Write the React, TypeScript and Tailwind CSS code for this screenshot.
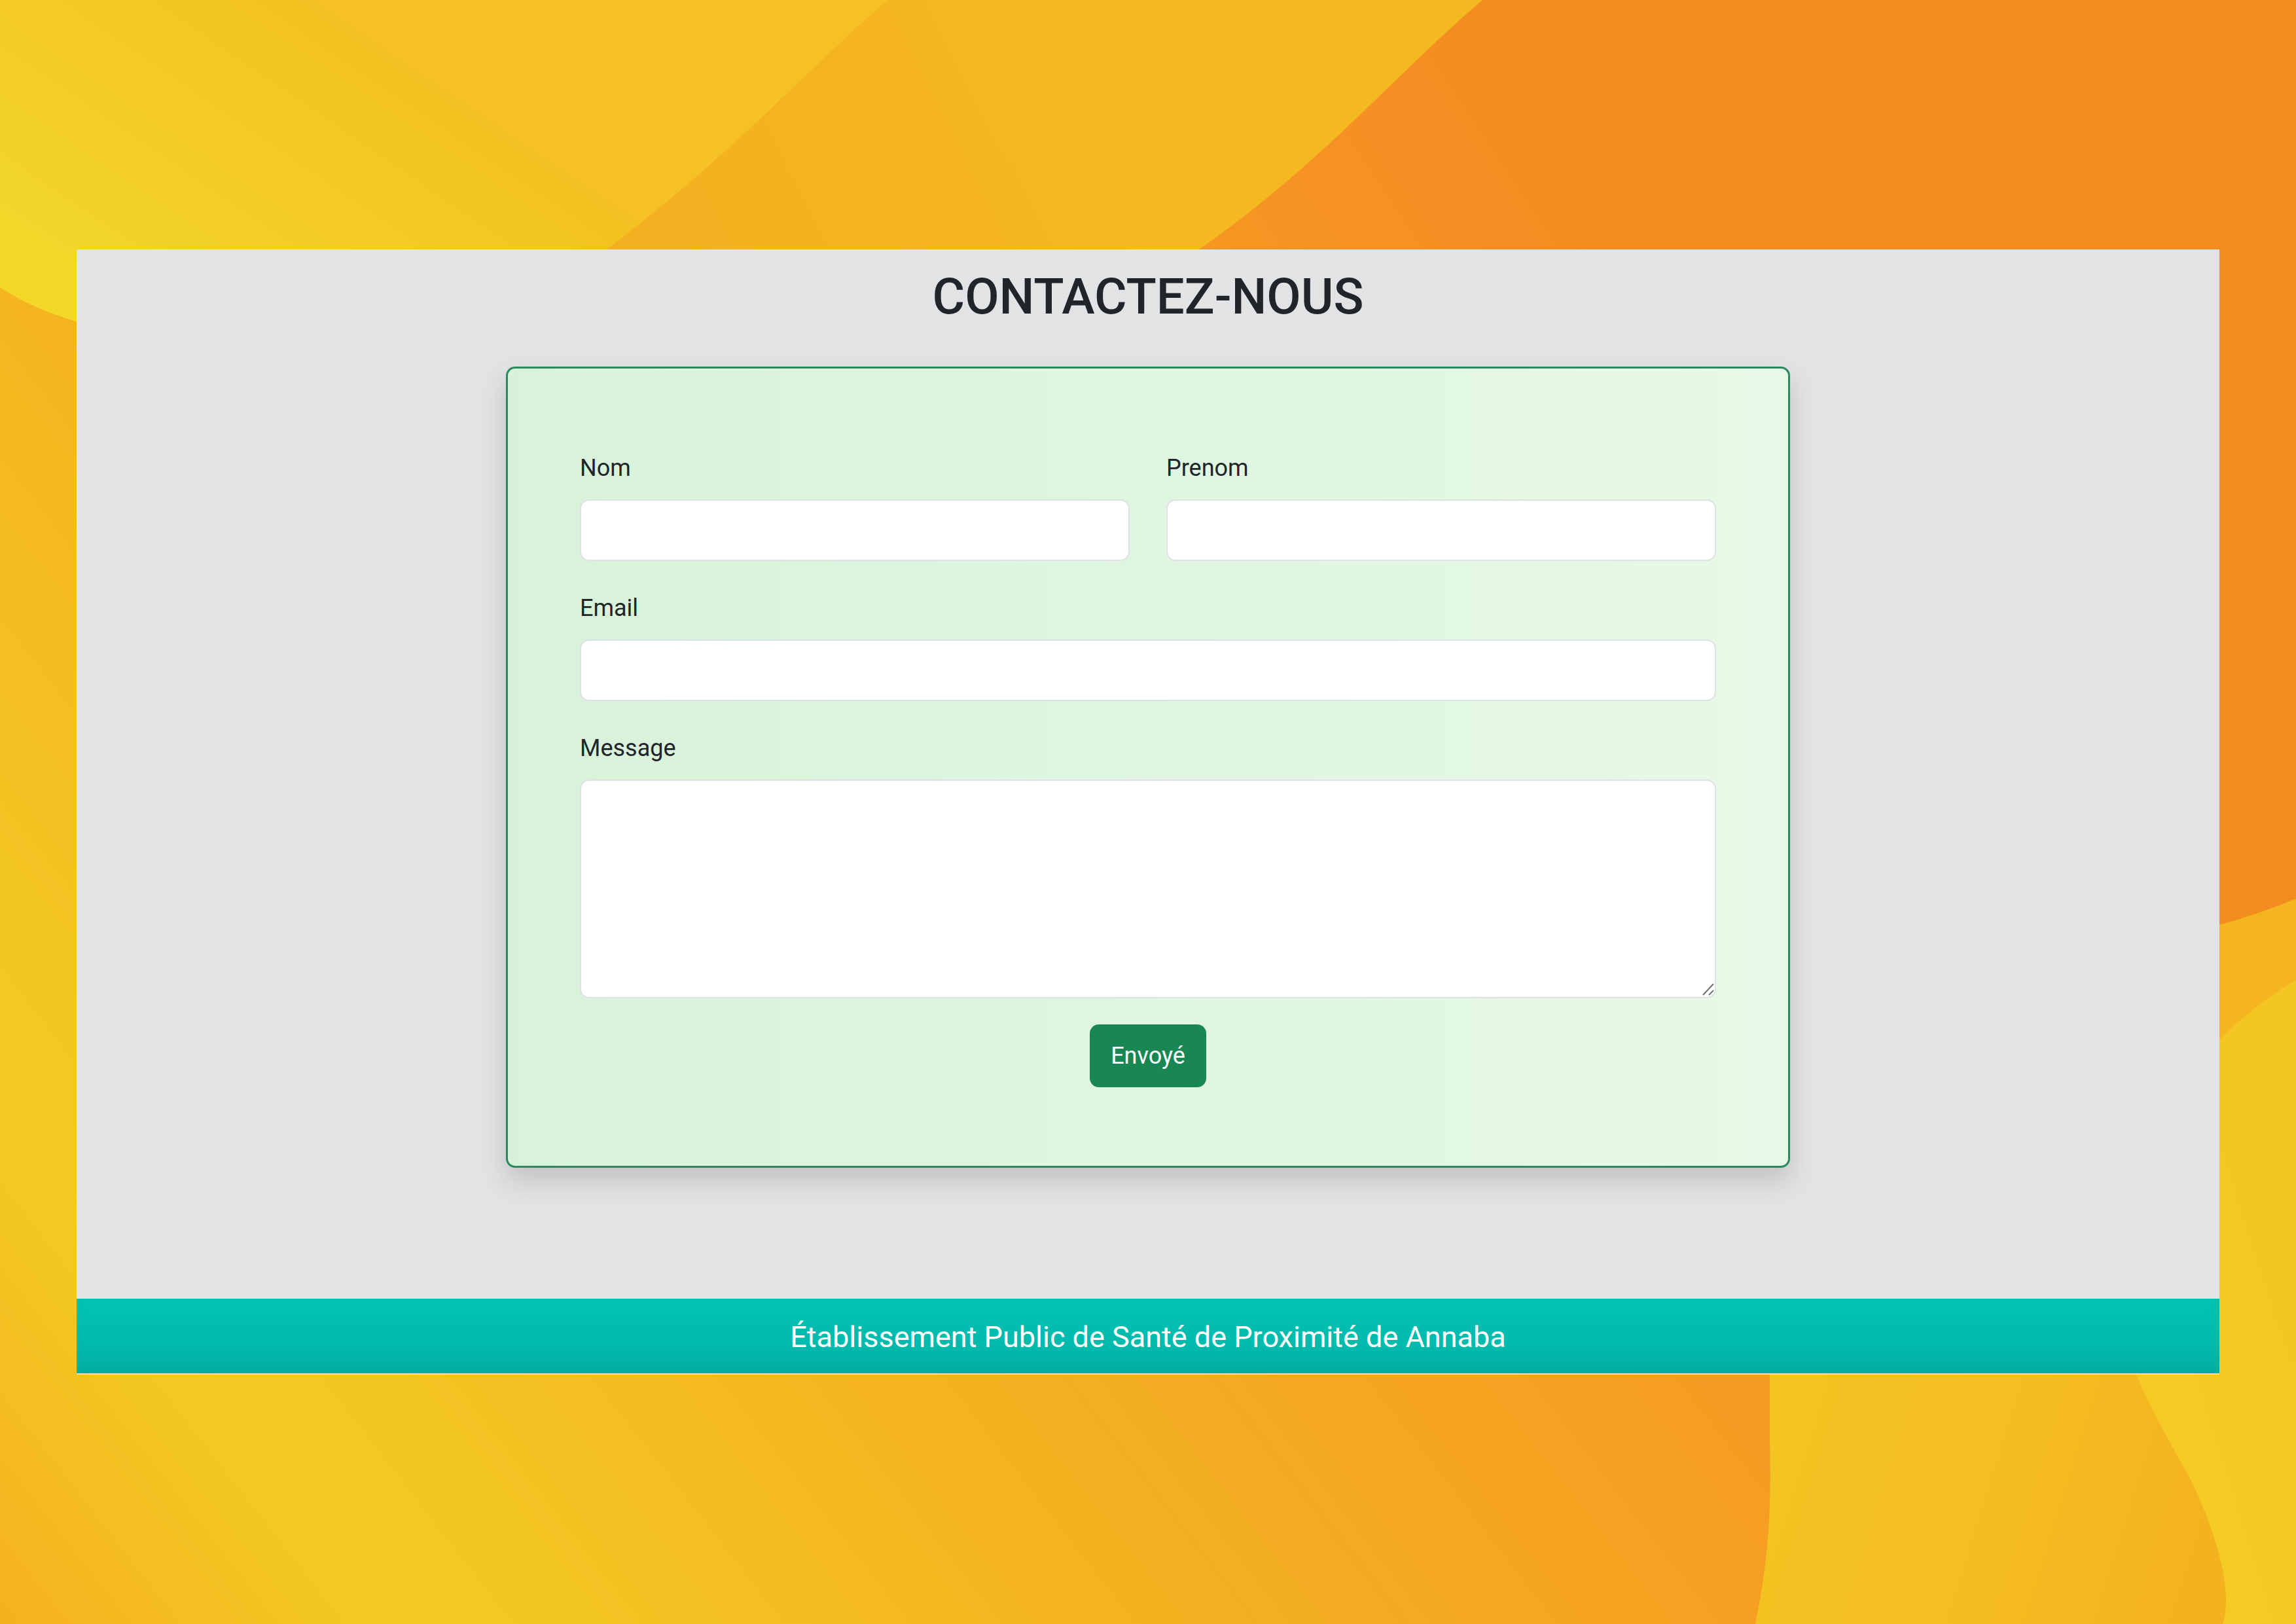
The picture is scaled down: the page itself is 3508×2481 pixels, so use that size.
import React from "react";

const fieldClass =
  "block w-full rounded-[14px] border-2 border-[#dee2e6] bg-white px-8 text-[36px] text-[#212529] outline-none focus:border-[#198754]";

function Backdrop() {
  return (
    <svg
      className="absolute inset-0 h-full w-full"
      viewBox="0 0 3508 2481"
      preserveAspectRatio="none"
      aria-hidden="true"
    >
      <defs>
        <linearGradient id="lower" gradientUnits="userSpaceOnUse" x1="0" y1="2481" x2="1794" y2="1082">
          <stop offset="0" stopColor="#f4b120" />
          <stop offset="0.1" stopColor="#f6be21" />
          <stop offset="0.15" stopColor="#f2c321" />
          <stop offset="0.21" stopColor="#f4c925" />
          <stop offset="0.32" stopColor="#f2c422" />
          <stop offset="0.44" stopColor="#f5bd20" />
          <stop offset="0.57" stopColor="#f4b41f" />
          <stop offset="0.72" stopColor="#f3ac22" />
          <stop offset="0.86" stopColor="#f6a321" />
          <stop offset="1" stopColor="#f59d22" />
        </linearGradient>
        <linearGradient id="sun" gradientUnits="userSpaceOnUse" x1="0" y1="360" x2="320" y2="-110">
          <stop offset="0" stopColor="#f4d829" />
          <stop offset="0.2" stopColor="#f0d229" />
          <stop offset="0.42" stopColor="#f5cd27" />
          <stop offset="0.7" stopColor="#f3c824" />
          <stop offset="0.96" stopColor="#f2c220" />
          <stop offset="1" stopColor="#f5c124" />
        </linearGradient>
        <linearGradient id="amber" gradientUnits="userSpaceOnUse" x1="950" y1="381" x2="1700" y2="0">
          <stop offset="0" stopColor="#f4af20" />
          <stop offset="1" stopColor="#f4b921" />
        </linearGradient>
        <linearGradient id="orange" gradientUnits="userSpaceOnUse" x1="1850" y1="381" x2="2280" y2="90">
          <stop offset="0" stopColor="#f59722" />
          <stop offset="0.7" stopColor="#f68e24" />
          <stop offset="1" stopColor="#f48d1f" />
        </linearGradient>
        <linearGradient id="corner" gradientUnits="userSpaceOnUse" x1="2700" y1="2200" x2="3400" y2="2420">
          <stop offset="0" stopColor="#f3c422" />
          <stop offset="0.5" stopColor="#f5bd21" />
          <stop offset="1" stopColor="#f3b120" />
        </linearGradient>
        <linearGradient id="edge" gradientUnits="userSpaceOnUse" x1="3300" y1="2150" x2="3520" y2="2080">
          <stop offset="0" stopColor="#f4cb25" />
          <stop offset="1" stopColor="#f3c623" />
        </linearGradient>
      </defs>
      <rect width="3508" height="2481" fill="url(#lower)" />
      <path d="M0 0H1500V600H300Q117 491 117 491Q50 472 0 439Z" fill="url(#sun)" />
      <path d="M1356 0C1240 100 1120 235 927 381L900 600H2400V0Z" fill="url(#amber)" />
      <path d="M2265 0C2130 115 2020 250 1832 381L1800 600H3300V1440L3391 1413Q3450 1397 3508 1373V0Z" fill="url(#orange)" />
      <path d="M3300 600H3508V1373Q3450 1397 3391 1413L3300 1440Z" fill="#f48d1f" />
      <path d="M3300 1438L3391 1413Q3450 1397 3508 1373V1700H3300Z" fill="#f4b520" />
      <path d="M2704 2000V2200C2706 2290 2705 2370 2682 2481H3508V2000Z" fill="url(#corner)" />
      <path d="M3300 1660L3391 1588Q3447 1533 3508 1497V2481H3396C3410 2440 3395 2360 3347 2260C3316 2205 3290 2160 3264 2100L3200 2000Z" fill="url(#edge)" />
    </svg>
  );
}

function FieldLabel({ htmlFor, children }: { htmlFor: string; children: React.ReactNode }) {
  return (
    <label htmlFor={htmlFor} className="mb-4 block text-[36px] leading-[64px]">
      {children}
    </label>
  );
}

function Field({ id, label, type = "text" }: { id: string; label: string; type?: string }) {
  return (
    <div className="min-w-0 flex-1">
      <FieldLabel htmlFor={id}>{label}</FieldLabel>
      <input id={id} name={id} type={type} className={`${fieldClass} h-[94px]`} />
    </div>
  );
}

function ContactForm() {
  return (
    <form
      onSubmit={(e) => e.preventDefault()}
      className="flex w-full max-w-[1962px] flex-col gap-10 rounded-[14px] border-[3px] border-[#2a8a5f] bg-linear-to-r from-[#d8f2d9] to-[#e6f9e6] px-[110px] py-[120px] shadow-[0_20px_40px_rgba(0,0,0,0.15)]"
    >
      <div className="flex gap-14">
        <Field id="nom" label="Nom" />
        <Field id="prenom" label="Prenom" />
      </div>
      <div className="flex">
        <Field id="email" label="Email" type="email" />
      </div>
      <div>
        <FieldLabel htmlFor="message">Message</FieldLabel>
        <div className="relative">
          <textarea id="message" name="message" className={`${fieldClass} h-[334px] resize-none py-4`} />
          <svg
            className="pointer-events-none absolute right-0.5 bottom-0.5 h-5 w-5"
            viewBox="0 0 20 20"
            fill="none"
            stroke="#6f6f6f"
            strokeWidth="2"
            aria-hidden="true"
          >
            <path d="M2 17L18 0M11 17L18 10" />
          </svg>
        </div>
      </div>
      <button
        type="submit"
        className="h-24 self-center rounded-[14px] bg-[#198754] px-8 text-[36px] leading-[64px] text-white"
      >
        Envoyé
      </button>
    </form>
  );
}

export default function App() {
  return (
    <div className="relative flex min-h-screen items-center overflow-hidden px-[117px] font-[Roboto,sans-serif] text-[#212529]">
      <Backdrop />
      <div className="relative w-full border-b-2 border-[#d5e6d8] bg-[#e2e3e5]">
        <main className="flex flex-col items-center px-10 pt-6 pb-[200px]">
          <h1 className="mb-[59px] text-[76px] leading-[96px] font-medium">CONTACTEZ-NOUS</h1>
          <ContactForm />
        </main>
        <footer className="bg-[#02c0b2] pt-[22px] pb-[18px] text-center text-[45px] leading-[74px] text-white shadow-[inset_0_-80px_80px_-70px_rgba(0,40,40,0.2)]">
          Établissement Public de Santé de Proximité de Annaba
        </footer>
      </div>
    </div>
  );
}
